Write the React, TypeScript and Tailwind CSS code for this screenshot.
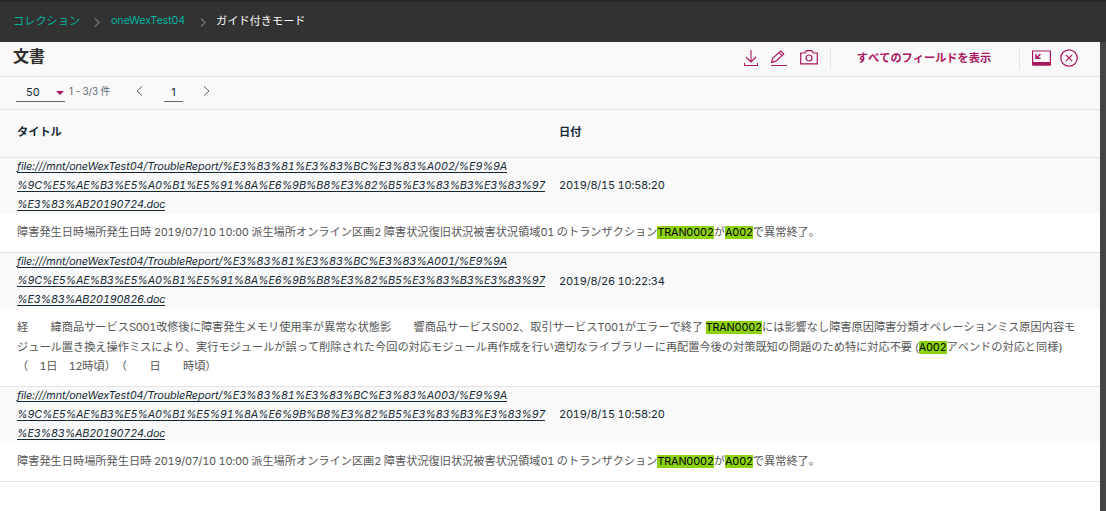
import React from "react";

interface TextPart {
  text: string;
  type?: "mark" | "latin";
}

interface DocumentProps {
  link: string[];
  date: string;
  lines: TextPart[][];
}

const documents: DocumentProps[] = [
  {
    link: [
      "file:///mnt/oneWexTest04/TroubleReport/%E3%83%81%E3%83%BC%E3%83%A002/%E9%9A",
      "%9C%E5%AE%B3%E5%A0%B1%E5%91%8A%E6%9B%B8%E3%82%B5%E3%83%B3%E3%83%97",
      "%E3%83%AB20190724.doc",
    ],
    date: "2019/8/15 10:58:20",
    lines: [
      [
        { text: "障害発生日時場所発生日時" },
        { text: " 2019/07/10 10:00 ", type: "latin" },
        { text: "派生場所オンライン区画" },
        { text: "2 ", type: "latin" },
        { text: "障害状況復旧状況被害状況領域" },
        { text: "01 ", type: "latin" },
        { text: "のトランザクション" },
        { text: "TRAN0002", type: "mark" },
        { text: "が" },
        { text: "A002", type: "mark" },
        { text: "で異常終了。" },
      ],
    ],
  },
  {
    link: [
      "file:///mnt/oneWexTest04/TroubleReport/%E3%83%81%E3%83%BC%E3%83%A001/%E9%9A",
      "%9C%E5%AE%B3%E5%A0%B1%E5%91%8A%E6%9B%B8%E3%82%B5%E3%83%B3%E3%83%97",
      "%E3%83%AB20190826.doc",
    ],
    date: "2019/8/26 10:22:34",
    lines: [
      [
        { text: "経　　緯商品サービス" },
        { text: "S001", type: "latin" },
        { text: "改修後に障害発生メモリ使用率が異常な状態影　　響商品サービス" },
        { text: "S002", type: "latin" },
        { text: "、取引サービス" },
        { text: "T001", type: "latin" },
        { text: "がエラーで終了" },
        { text: " ", type: "latin" },
        { text: "TRAN0002", type: "mark" },
        { text: "には影響なし障害原因障害分類オペレーションミス原因内容モ" },
      ],
      [
        {
          text: "ジュール置き換え操作ミスにより、実行モジュールが誤って削除された今回の対応モジュール再作成を行い適切なライブラリーに再配置今後の対策既知の問題のため特に対応不要",
        },
        { text: " (", type: "latin" },
        { text: "A002", type: "mark" },
        { text: "アベンドの対応と同様" },
        { text: ")", type: "latin" },
      ],
      [
        { text: "（　" },
        { text: "1", type: "latin" },
        { text: "日　" },
        { text: "12", type: "latin" },
        { text: "時頃）（　　日　　時頃）" },
      ],
    ],
  },
  {
    link: [
      "file:///mnt/oneWexTest04/TroubleReport/%E3%83%81%E3%83%BC%E3%83%A003/%E9%9A",
      "%9C%E5%AE%B3%E5%A0%B1%E5%91%8A%E6%9B%B8%E3%82%B5%E3%83%B3%E3%83%97",
      "%E3%83%AB20190724.doc",
    ],
    date: "2019/8/15 10:58:20",
    lines: [],
  },
];
documents[2].lines = documents[0].lines;

function DocumentItem({ link, date, lines }: DocumentProps) {
  return (
    <section className="border-t border-[#e4e4e4]">
      <div className="flex h-[56.12px] items-center bg-[#f9f9f9] text-[#152935]">
        <a
          href="#"
          className="mt-[1px] w-[559px] shrink-0 pl-[17px] text-[10.8px] leading-[19.04px] tracking-[-0.175px] italic tabular-nums [font-kerning:auto]"
        >
          {link.map((line, index) => (
            <span key={index} className="block first:tracking-[-0.095px]">
              <span className="inline-block h-[15px] border-b border-[#152935] align-top leading-[18px]">
                {line}
              </span>
            </span>
          ))}
        </a>
        <span className="pb-[1px] text-[11px] tracking-[-0.22px] tabular-nums">{date}</span>
      </div>
      <div className="bg-white px-[17px] pt-[9px] pb-[10.04px] text-[#565656]">
        {lines.map((parts, index) => (
          <p key={index} className="h-[19.04px] leading-[19.04px]">
            {parts.map((part, partIndex) =>
              part.type === "mark" ? (
                <mark
                  key={partIndex}
                  className="bg-[#8cd211] text-[10.8px] tracking-[-0.15px] text-black tabular-nums [font-kerning:auto]"
                >
                  {part.text}
                </mark>
              ) : part.type === "latin" ? (
                <span key={partIndex} className="text-[11px] tracking-[-0.3px] tabular-nums">
                  {part.text}
                </span>
              ) : (
                <span key={partIndex}>{part.text}</span>
              )
            )}
          </p>
        ))}
      </div>
    </section>
  );
}

function Separator({ className }: { className: string }) {
  return (
    <svg className={className} width="6" height="9" viewBox="0 0 6 9" fill="none" stroke="#777" strokeWidth="1.2">
      <path d="M1 .5l4 4-4 4" />
    </svg>
  );
}

function Breadcrumb() {
  return (
    <nav className="flex h-[42px] items-center border-t-2 border-[#262626] bg-[#323232] pb-[1px] pl-[13px] text-[11.2px] leading-[16px] text-[#00b4a0]">
      <a href="#" className="w-[67px] pb-[2px]">コレクション</a>
      <Separator className="mt-[1px] ml-[14px]" />
      <a href="#" className="ml-[11px] w-[75px] pb-[2px] text-[10.8px] tracking-[-0.1px] [font-kerning:auto]">
        oneWexTest04
      </a>
      <Separator className="mt-[1px] ml-[14px]" />
      <span className="ml-[10px] pb-[2px] text-white">ガイド付きモード</span>
    </nav>
  );
}

function Toolbar() {
  return (
    <header className="flex h-[35px] items-center border-b border-[#e4e4e4] text-[#aa1660]">
      <h1 className="w-[743px] shrink-0 pb-[6px] pl-[13px] text-[16px] font-bold text-[#2d2d2d]">文書</h1>
      <svg className="-mt-[2px]" width="16" height="18" viewBox="0 0 16 18" fill="none" stroke="currentColor" strokeWidth="1.1">
        <path d="M8 1v12M3 8l5 5 5-5M1.5 14v2.5h13V14" />
      </svg>
      <svg className="-mt-[2px] ml-[11px]" width="17" height="18" viewBox="0 0 17 18" fill="none" stroke="currentColor" strokeWidth="1.1">
        <path d="M1 16.5h16M1.6 13.4l1-4L10.8 2l3 3L5.6 12.4zM9 3.7l3 3" />
      </svg>
      <svg className="-mt-[2px] ml-[13px]" width="18" height="18" viewBox="0 0 18 18" fill="none" stroke="currentColor" strokeWidth="1.2">
        <path d="M.7 4h4.1l1.5-2.4h5.4L13.2 4h4.1v10.8H.7z" />
        <circle cx="9" cy="9" r="3" />
      </svg>
      <div className="ml-[12px] flex h-[22px] w-[190px] items-center justify-center border-x border-[#e4e4e4] pr-[2px] pb-[2px] text-[11.2px] font-bold">
        すべてのフィールドを表示
      </div>
      <svg className="-mt-[2px] ml-[12px]" width="19" height="16" viewBox="0 0 19 16" fill="none" stroke="currentColor" strokeWidth="1.2">
        <path d="M.6 1h17.8v14H.6z" />
        <path d="M1 12h17v3.5H1z" fill="currentColor" stroke="none" />
        <path d="M8.5 4l-4 4M4 4v4.3h4.5" strokeWidth="1.5" />
      </svg>
      <svg className="-mt-[2px] ml-[9px]" width="18" height="18" viewBox="0 0 18 18" fill="none" stroke="currentColor" strokeWidth="1.2">
        <circle cx="9" cy="9" r="8.2" />
        <path d="M5.8 5.8l6.4 6.4M12.2 5.8l-6.4 6.4" />
      </svg>
    </header>
  );
}

function Pagination() {
  return (
    <div className="flex h-[33px] items-center border-b border-[#e4e4e4] pb-[4px] pl-[16px]">
      <div className="mt-[2px] flex h-[19px] w-[49px] items-center justify-between border-b border-[#5a6872] pt-[2px] pr-[1px] pl-[10px] text-[11px] text-[#152935]">
        50
        <svg width="8" height="4" viewBox="0 0 8 4" fill="#aa1660">
          <path d="M0 0h8L4 4z" />
        </svg>
      </div>
      <span className="ml-[4px] w-[41px] pt-[2px] text-[9.8px] tracking-[-0.1px] text-[#5a6872]">1 - 3/3 件</span>
      <svg className="ml-[26px]" width="7" height="10" viewBox="0 0 7 10" fill="none" stroke="#5a6872">
        <path d="M6 .5L1 5l5 4.5" />
      </svg>
      <span className="mt-[2px] ml-[21px] h-[19px] w-[19px] border-b border-[#5a6872] text-center text-[11px] leading-[19px] text-[#152935]">
        1
      </span>
      <svg className="ml-[20px]" width="7" height="10" viewBox="0 0 7 10" fill="none" stroke="#5a6872">
        <path d="M1 .5L6 5 1 9.5" />
      </svg>
    </div>
  );
}

export default function App() {
  return (
    <div className="h-[511px] w-[1106px] overflow-hidden bg-[#444] font-[Inter,'Noto_Sans_CJK_JP',sans-serif] text-[11.2px] whitespace-nowrap [font-kerning:none] [text-spacing-trim:space-all]">
      <Breadcrumb />
      <main className="h-[469px] w-[1100px] bg-white">
        <div className="bg-[#f9f9f9]">
          <Toolbar />
          <Pagination />
          <div className="flex h-[47.2px] items-center pl-[17px] pb-[2px] font-bold text-[#152935]">
            <span className="w-[542px]">タイトル</span>
            <span>日付</span>
          </div>
        </div>
        {documents.map((document, index) => (
          <DocumentItem key={index} {...document} />
        ))}
        <div className="border-t border-[#e4e4e4]" />
      </main>
    </div>
  );
}
